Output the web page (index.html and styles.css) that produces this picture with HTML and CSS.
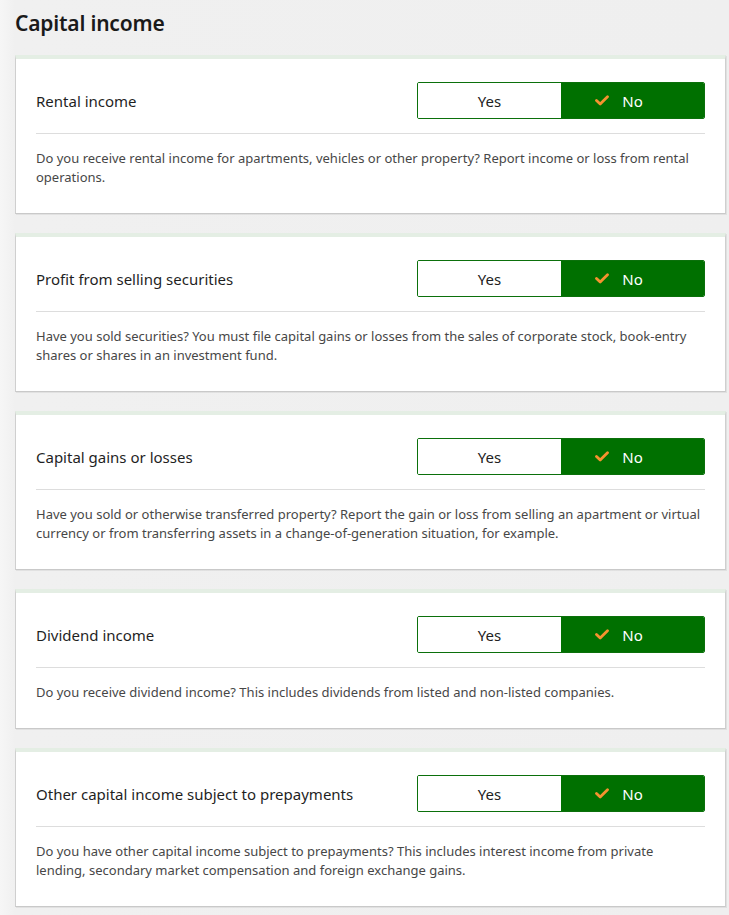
FILE: index.html
```html
<!DOCTYPE html>
<html lang="en">
<head>
<meta charset="utf-8">
<title>Capital income</title>
<link rel="stylesheet" href="styles.css">
</head>
<body>
<main class="page">
  <h1 class="title">Capital income</h1>

  <section class="card">
    <div class="card-head">
      <span class="label">Rental income</span>
      <div class="toggle">
        <button class="opt"><span class="opt-text">Yes</span></button>
        <button class="opt on"><span class="opt-text"><svg class="check" viewBox="0 0 14 11" width="14" height="11"><path d="M1.5 5.5 L5.2 9 L12.5 1.8" fill="none" stroke="#f5922f" stroke-width="2.8" stroke-linecap="round" stroke-linejoin="round"/></svg>No</span></button>
      </div>
    </div>
    <p class="desc">Do you receive rental income for apartments, vehicles or other property? Report income or loss from rental operations.</p>
  </section>

  <section class="card">
    <div class="card-head">
      <span class="label">Profit from selling securities</span>
      <div class="toggle">
        <button class="opt"><span class="opt-text">Yes</span></button>
        <button class="opt on"><span class="opt-text"><svg class="check" viewBox="0 0 14 11" width="14" height="11"><path d="M1.5 5.5 L5.2 9 L12.5 1.8" fill="none" stroke="#f5922f" stroke-width="2.8" stroke-linecap="round" stroke-linejoin="round"/></svg>No</span></button>
      </div>
    </div>
    <p class="desc">Have you sold securities? You must file capital gains or losses from the sales of corporate stock, book-entry shares or shares in an investment fund.</p>
  </section>

  <section class="card">
    <div class="card-head">
      <span class="label">Capital gains or losses</span>
      <div class="toggle">
        <button class="opt"><span class="opt-text">Yes</span></button>
        <button class="opt on"><span class="opt-text"><svg class="check" viewBox="0 0 14 11" width="14" height="11"><path d="M1.5 5.5 L5.2 9 L12.5 1.8" fill="none" stroke="#f5922f" stroke-width="2.8" stroke-linecap="round" stroke-linejoin="round"/></svg>No</span></button>
      </div>
    </div>
    <p class="desc">Have you sold or otherwise transferred property? Report the gain or loss from selling an apartment or virtual currency or from transferring assets in a change-of-generation situation, for example.</p>
  </section>

  <section class="card">
    <div class="card-head">
      <span class="label">Dividend income</span>
      <div class="toggle">
        <button class="opt"><span class="opt-text">Yes</span></button>
        <button class="opt on"><span class="opt-text"><svg class="check" viewBox="0 0 14 11" width="14" height="11"><path d="M1.5 5.5 L5.2 9 L12.5 1.8" fill="none" stroke="#f5922f" stroke-width="2.8" stroke-linecap="round" stroke-linejoin="round"/></svg>No</span></button>
      </div>
    </div>
    <p class="desc">Do you receive dividend income? This includes dividends from listed and non-listed companies.</p>
  </section>

  <section class="card">
    <div class="card-head">
      <span class="label">Other capital income subject to prepayments</span>
      <div class="toggle">
        <button class="opt"><span class="opt-text">Yes</span></button>
        <button class="opt on"><span class="opt-text"><svg class="check" viewBox="0 0 14 11" width="14" height="11"><path d="M1.5 5.5 L5.2 9 L12.5 1.8" fill="none" stroke="#f5922f" stroke-width="2.8" stroke-linecap="round" stroke-linejoin="round"/></svg>No</span></button>
      </div>
    </div>
    <p class="desc">Do you have other capital income subject to prepayments? This includes interest income from private lending, secondary market compensation and foreign exchange gains.</p>
  </section>
</main>
</body>
</html>
```

FILE: styles.css
```css
html {
  overflow: hidden;
}

body {
  margin: 0;
  background: linear-gradient(to right, #f6f6f6 0, #f0f0f0 15px, #efefef 100%);
  font-family: "Noto Sans", "Open Sans", sans-serif;
  color: #222;
}

.page {
  padding: 0 3px 20px 15px;
}

.title {
  margin: 0;
  padding-top: 8px;
  height: 55px;
  box-sizing: border-box;
  font-size: 21px;
  line-height: 30px;
  font-weight: 600;
  color: #1a1a1a;
  letter-spacing: -0.2px;
}

.card {
  background: #fff;
  border-top: 4px solid #e4eee4;
  border-left: 1px solid #cfcfcf;
  border-right: 1px solid #cfcfcf;
  border-bottom: 1px solid #c9c9c9;
  box-shadow: 1px 1px 0 rgba(0, 0, 0, 0.06);
  padding: 23px 20px 26px 20px;
  margin-bottom: 19px;
}

.card-head {
  display: flex;
  align-items: center;
  justify-content: space-between;
  padding-bottom: 14px;
  border-bottom: 1px solid #dddddd;
}

.label {
  font-size: 15px;
  color: #1f1f1f;
}

.toggle {
  display: grid;
  grid-template-columns: 1fr 1fr;
  width: 288px;
  height: 37px;
  border: 1px solid #0b700b;
  border-radius: 2px;
  overflow: hidden;
  box-sizing: border-box;
}

.opt {
  display: flex;
  align-items: center;
  justify-content: center;
  border: 0;
  margin: 0;
  padding: 0;
  background: #fff;
  font-family: inherit;
  font-size: 15px;
  color: #222;
}

.opt.on {
  background: #007000;
  color: #fff;
}

.opt-text {
  display: inline-flex;
  align-items: center;
}

.on .opt-text {
  margin-left: -27px;
}

.check {
  margin-right: 13px;
}

.desc {
  margin: 15px 0 0 0;
  font-size: 13px;
  line-height: 19px;
  color: #474747;
}
```
